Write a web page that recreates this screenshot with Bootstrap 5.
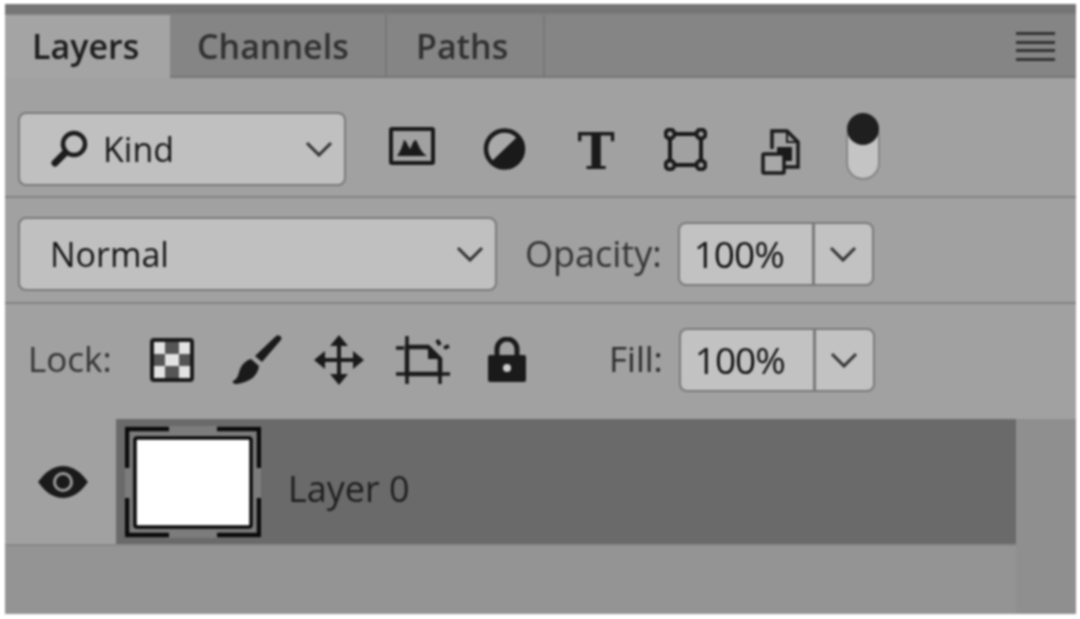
<!DOCTYPE html>
<html lang="en">
<head>
  <meta charset="UTF-8">
  <title>Layers panel</title>
  <link href="https://cdn.jsdelivr.net/npm/bootstrap@5.3.0/dist/css/bootstrap.min.css" rel="stylesheet">
  <style>
    body {
      background: #fff;
      margin: 0;
      padding: 4px 4px 5px 5px;
      font-family: "Open Sans", "Noto Sans", sans-serif;
      overflow: hidden;
    }
    .ps-panel {
      width: 1071px;
      height: 610px;
      background: #a1a1a1;
      filter: blur(1px);
    }
    .ps-top { height: 11px; background: #757575; border-bottom: 2px solid #7e7e7e; }
    .ps-tabs { height: 63px; background: #858585; border-bottom: 2px solid #767676; }
    .ps-tab {
      font-size: 34px;
      font-weight: 600;
      color: #303030;
      padding: 0 27px;
      border-right: 2px solid #787878;
      height: 62px;
    }
    .ps-tab-on { background: #a4a4a4; color: #1c1c1c; height: 63px; width: 165px; border-right: 0; }
    .ps-tab-mid { width: 217px; }
    .ps-tab-end { width: 158px; padding-left: 29px; }
    .ps-menu { width: 39px; margin-right: 21px; margin-top: 17px; }
    .ps-menu i { display: block; height: 3px; background: #333; margin-bottom: 5.5px; }
    .ps-row1 { height: 120px; padding: 24px 0 0 13px; border-bottom: 2px solid #828282; }
    .ps-row2 { height: 106px; padding: 8px 0 0 13px; border-bottom: 2px solid #828282; }
    .ps-row3 { height: 115px; padding: 0 0 4px 23px; }
    .ps-sel {
      height: 74px;
      background: #c0c0c0;
      border: 2px solid #7a7a7a;
      border-radius: 8px;
      color: #151515;
      font-size: 34px;
      font-weight: 500;
      padding: 0 11px 0 30px;
    }
    .ps-sel:hover { background: #c0c0c0; border-color: #7a7a7a; color: #151515; }
    .ps-kind { width: 328px; }
    .ps-kind svg:first-child { margin-right: 13px; }
    .ps-blend { width: 479px; }
    .ps-slot { width: 92px; }
    .ps-slots { margin-left: 20px; }
    .ps-up { margin-bottom: 6px; }
    .ps-down { margin-top: 6px; }
    .ps-left { margin-right: 5px; }
    .ps-toggle { margin-left: 19px; margin-top: -6px; }
    .ps-t { font-family: "DejaVu Serif", serif; font-weight: 700; font-size: 50px; line-height: 1; color: #1a1a1a; }
    .ps-label { font-size: 35px; font-weight: 500; color: #333; }
    .ps-num { width: 196px; height: 64px; margin-left: 16px; }
    .ps-num .form-control {
      background: #c2c2c2;
      border: 2px solid #7a7a7a;
      border-radius: 8px 0 0 8px;
      color: #111;
      font-size: 37px;
      font-weight: 500;
      letter-spacing: -1px;
      padding: 0 0 0 14px;
      box-shadow: none;
    }
    .ps-num .btn {
      width: 61px;
      background: #c2c2c2;
      border: 2px solid #7a7a7a;
      border-radius: 0 8px 8px 0;
      padding: 0;
    }
    .ps-opacity { margin-left: 28px; font-size: 36px; }
    .ps-fill-label { margin-left: 82px; color: #2c2c2c; }
    .ps-lock-label { width: 122px; }
    .ps-lock-slot { width: 82px; }
    .ps-lock-wide { width: 91px; }
    .ps-layer { height: 125px; }
    .ps-eye { width: 111px; padding-left: 4px; }
    .ps-active { width: 900px; background: #6a6a6a; color: #1e1e1e; font-size: 36px; font-weight: 500; padding-left: 9px; }
    .ps-thumb { margin-right: 27px; }
    .ps-name { margin-top: 14px; }
    .ps-track { width: 60px; background: #8f8f8f; }
    .ps-empty { width: 1011px; background: #949494; border-top: 2px solid #888; }
  </style>
</head>
<body>

<div class="ps-panel d-flex flex-column">
  <div class="ps-top"></div>

  <div class="ps-tabs d-flex align-items-start">
    <div class="ps-tab ps-tab-on d-flex align-items-center">Layers</div>
    <div class="ps-tab ps-tab-mid d-flex align-items-center">Channels</div>
    <div class="ps-tab ps-tab-end d-flex align-items-center">Paths</div>
    <div class="ps-menu ms-auto"><i></i><i></i><i></i><i></i></div>
  </div>

  <div class="ps-row1 d-flex align-items-center">
    <button type="button" class="btn ps-sel ps-kind d-flex align-items-center">
      <svg width="40" height="40" viewBox="0 0 40 40"><circle cx="24" cy="15" r="11" fill="none" stroke="#1c1c1c" stroke-width="4.500"/><path d="M15 24 5 34" stroke="#1c1c1c" stroke-width="7" stroke-linecap="round"/></svg>
      <span>Kind</span>
      <svg width="28" height="16" viewBox="0 0 28 16" class="ms-auto"><path d="M2 2l12 12L26 2" fill="none" stroke="#333" stroke-width="3"/></svg>
    </button>
    <div class="ps-slots d-flex align-items-center">
      <div class="ps-slot d-flex justify-content-center ps-up">
        <svg width="46" height="38" viewBox="0 0 46 38"><rect x="2" y="2" width="42" height="34" rx="1" fill="none" stroke="#1a1a1a" stroke-width="4"/><path d="M8 29c3-4 5-9 7-16 2 0 4 6 6 9 2-3 3-9 6-9 2 3 4 12 11 16z" fill="#1a1a1a"/></svg>
      </div>
      <div class="ps-slot d-flex justify-content-center">
        <svg width="43" height="42" viewBox="0 0 43 42"><circle cx="21.5" cy="21" r="18.500" fill="#aaa" stroke="#1a1a1a" stroke-width="4.500"/><path d="M35 8A18.500 18.500 0 0 1 8 34z" fill="#1a1a1a"/></svg>
      </div>
      <div class="ps-slot d-flex justify-content-center ps-down"><span class="ps-t">T</span></div>
      <div class="ps-slot d-flex justify-content-center">
        <svg class="ps-left" width="43" height="43" viewBox="0 0 43 43" fill="#a1a1a1" stroke="#1a1a1a" stroke-width="4"><rect x="6" y="6" width="31" height="31" fill="none"/><circle cx="6" cy="6" r="4.500"/><circle cx="37" cy="6" r="4.500"/><circle cx="6" cy="37" r="4.500"/><circle cx="37" cy="37" r="4.500"/></svg>
      </div>
      <div class="ps-slot d-flex justify-content-center ps-down">
        <svg width="39" height="46" viewBox="0 0 39 46"><path d="M11 20V2h15l11 11v25H24" fill="none" stroke="#1a1a1a" stroke-width="3.500"/><path d="M26 2v11h11" fill="none" stroke="#1a1a1a" stroke-width="2"/><path d="M16 18h15v14H23v-8h-7z" fill="#1a1a1a"/><rect x="2" y="25" width="21" height="19" rx="1" fill="#a8a8a8" stroke="#1a1a1a" stroke-width="3.500"/></svg>
      </div>
      <svg class="ps-toggle" width="36" height="68" viewBox="0 0 36 68"><rect x="2" y="10" width="32" height="57" rx="16" fill="#c4c4c4" stroke="#858585" stroke-width="2"/><circle cx="18" cy="17" r="16" fill="#1f1f1f"/></svg>
    </div>
  </div>

  <div class="ps-row2 d-flex align-items-center">
    <button type="button" class="btn ps-sel ps-blend d-flex align-items-center">
      <span>Normal</span>
      <svg width="28" height="16" viewBox="0 0 28 16" class="ms-auto"><path d="M2 2l12 12L26 2" fill="none" stroke="#333" stroke-width="3"/></svg>
    </button>
    <span class="ps-label ps-opacity">Opacity:</span>
    <div class="input-group flex-nowrap ps-num">
      <input type="text" class="form-control" value="100%">
      <button type="button" class="btn d-flex align-items-center justify-content-center">
        <svg width="28" height="16" viewBox="0 0 28 16"><path d="M2 2l12 12L26 2" fill="none" stroke="#333" stroke-width="3"/></svg>
      </button>
    </div>
  </div>

  <div class="ps-row3 d-flex align-items-center">
    <span class="ps-label ps-lock-label">Lock:</span>
    <div class="ps-lock-slot">
      <svg width="44" height="44" viewBox="0 0 44 44"><rect x="2" y="2" width="40" height="40" rx="2" fill="#e2e2e2" stroke="#1a1a1a" stroke-width="4"/><path d="M15 4h14v12H15zM4 16h11v12H4zM29 16h11v12H29zM15 28h14v12H15z" fill="#555"/></svg>
    </div>
    <div class="ps-lock-slot">
      <svg width="50" height="50" viewBox="0 0 50 50"><path d="M48 1c2 1 2 3 0 5L30 27l-7-6L43 2c2-2 3-2 5-1z" fill="#1a1a1a"/><path d="M19 24l8 7c-1 9-8 16-22 18-3 0-5-1-4-3 6-3 5-8 8-14 2-4 6-7 10-8z" fill="#1a1a1a"/></svg>
    </div>
    <div class="ps-lock-slot">
      <svg width="50" height="50" viewBox="0 0 50 50" fill="#1a1a1a"><path d="M25 0l9 11H16zM25 50l9-11H16zM0 25l11-9v18zM50 25l-11-9v18z"/><path d="M25 8v34M8 25h34" stroke="#1a1a1a" stroke-width="4"/></svg>
    </div>
    <div class="ps-lock-wide">
      <svg width="54" height="48" viewBox="0 0 54 48" fill="none" stroke="#1a1a1a"><path d="M0 12h8M11 0v10M0 38h54M11 30v18M44 30v18" stroke-width="3.500"/><path d="M11 11h21l12 12v15H11z" stroke-width="4.500"/><path d="M41 4l3 5M48 12l5-2" stroke-width="4"/><path d="M32 11l12 12H32z" fill="#1a1a1a" stroke="none"/></svg>
    </div>
    <div>
      <svg width="40" height="46" viewBox="0 0 40 46"><path d="M10 20v-8a10 10 0 0 1 20 0v8" fill="none" stroke="#1a1a1a" stroke-width="5"/><rect x="1" y="18" width="38" height="27" rx="2" fill="#1a1a1a"/><circle cx="20" cy="31" r="4" fill="#ccc"/></svg>
    </div>
    <span class="ps-label ps-fill-label">Fill:</span>
    <div class="input-group flex-nowrap ps-num">
      <input type="text" class="form-control" value="100%">
      <button type="button" class="btn d-flex align-items-center justify-content-center">
        <svg width="28" height="16" viewBox="0 0 28 16"><path d="M2 2l12 12L26 2" fill="none" stroke="#333" stroke-width="3"/></svg>
      </button>
    </div>
  </div>

  <div class="d-flex flex-grow-1">
    <div class="d-flex flex-column">
      <div class="ps-layer d-flex">
        <div class="ps-eye d-flex align-items-center justify-content-center">
          <svg width="52" height="34" viewBox="0 0 52 34"><path d="M1 17C9 6 17 1 26 1s17 5 25 16c-8 11-16 16-25 16S9 28 1 17z" fill="#1a1a1a"/><circle cx="26" cy="17" r="10" fill="#9a9a9a"/><circle cx="26" cy="17" r="7" fill="#1a1a1a"/></svg>
        </div>
        <div class="ps-active d-flex align-items-center">
          <svg class="ps-thumb" width="136" height="112" viewBox="0 0 136 112">
            <rect width="136" height="112" fill="#7c7c7c"/>
            <path d="M2 42V3h42M92 3h42v39M2 72v37h42M92 109h42V72" fill="none" stroke="#0a0a0a" stroke-width="4.500"/>
            <rect x="10" y="12" width="116" height="89" rx="2" fill="#fff" stroke="#0a0a0a" stroke-width="3.500"/>
          </svg>
          <span class="ps-name">Layer 0</span>
        </div>
      </div>
      <div class="ps-empty flex-grow-1"></div>
    </div>
    <div class="ps-track"></div>
  </div>
</div>

<script src="https://cdn.jsdelivr.net/npm/bootstrap@5.3.0/dist/js/bootstrap.bundle.min.js"></script>
</body>
</html>
